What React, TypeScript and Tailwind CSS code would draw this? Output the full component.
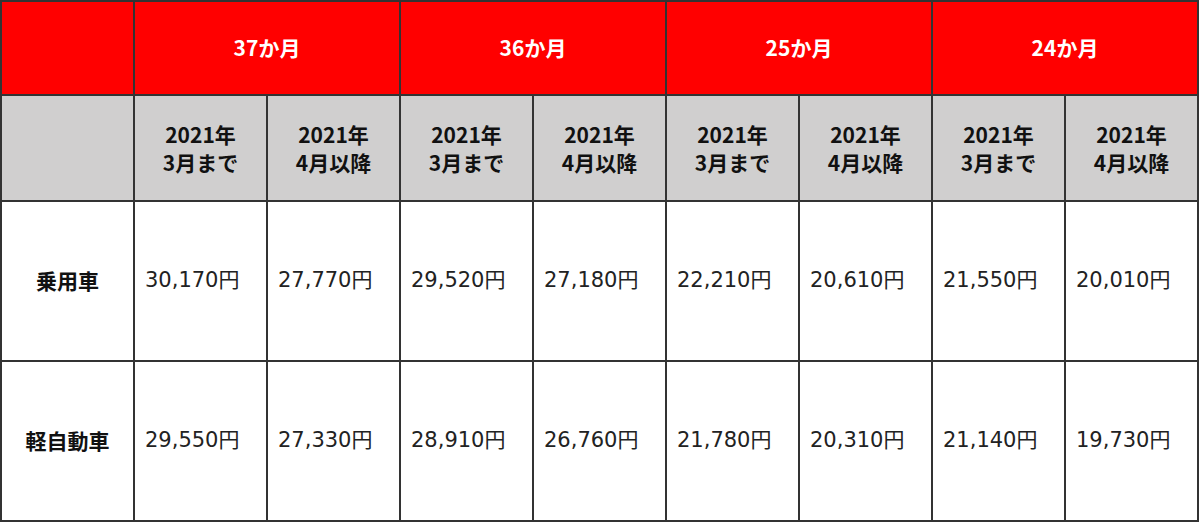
import React from 'react';

const groups = ['37か月', '36か月', '25か月', '24か月'];

const rows = [
  { label: '乗用車', values: ['30,170円', '27,770円', '29,520円', '27,180円', '22,210円', '20,610円', '21,550円', '20,010円'] },
  { label: '軽自動車', values: ['29,550円', '27,330円', '28,910円', '26,760円', '21,780円', '20,310円', '21,140円', '19,730円'] },
];

const cell = 'border-2 border-[#333333]';

const App = () => {
  return (
    <div className="w-[1200px] h-[522px] bg-white font-['Noto_Sans_CJK_JP',sans-serif]">
      <table className="border-collapse table-fixed w-[1198px]">
        <colgroup>
          <col className="w-[133px]" />
          {Array.from({ length: 8 }).map((_, i) => (
            <col key={i} className="w-[133px]" />
          ))}
        </colgroup>
        <thead>
          <tr className="h-[94px] bg-[#ff0000]">
            <th className={cell}></th>
            {groups.map((g) => (
              <th key={g} colSpan={2} className={`${cell} text-white text-[21px] font-bold`}>
                {g}
              </th>
            ))}
          </tr>
          <tr className="h-[106px] bg-[#d0cfcf]">
            <th className={cell}></th>
            {groups.map((g) => (
              <React.Fragment key={g}>
                <th className={`${cell} text-[21px] font-bold leading-[28px] text-[#111]`}>
                  2021年
                  <br />
                  3月まで
                </th>
                <th className={`${cell} text-[21px] font-bold leading-[28px] text-[#111]`}>
                  2021年
                  <br />
                  4月以降
                </th>
              </React.Fragment>
            ))}
          </tr>
        </thead>
        <tbody>
          {rows.map((r) => (
            <tr key={r.label} className="h-[160px]">
              <td className={`${cell} text-center text-[21px] font-bold text-[#111]`}>{r.label}</td>
              {r.values.map((v, i) => (
                <td key={i} className={`${cell} pl-[10px] text-[21px] text-[#222] font-['DejaVu_Sans','Noto_Sans_CJK_JP',sans-serif]`}>
                  {v}
                </td>
              ))}
            </tr>
          ))}
        </tbody>
      </table>
    </div>
  );
};

export default App;
